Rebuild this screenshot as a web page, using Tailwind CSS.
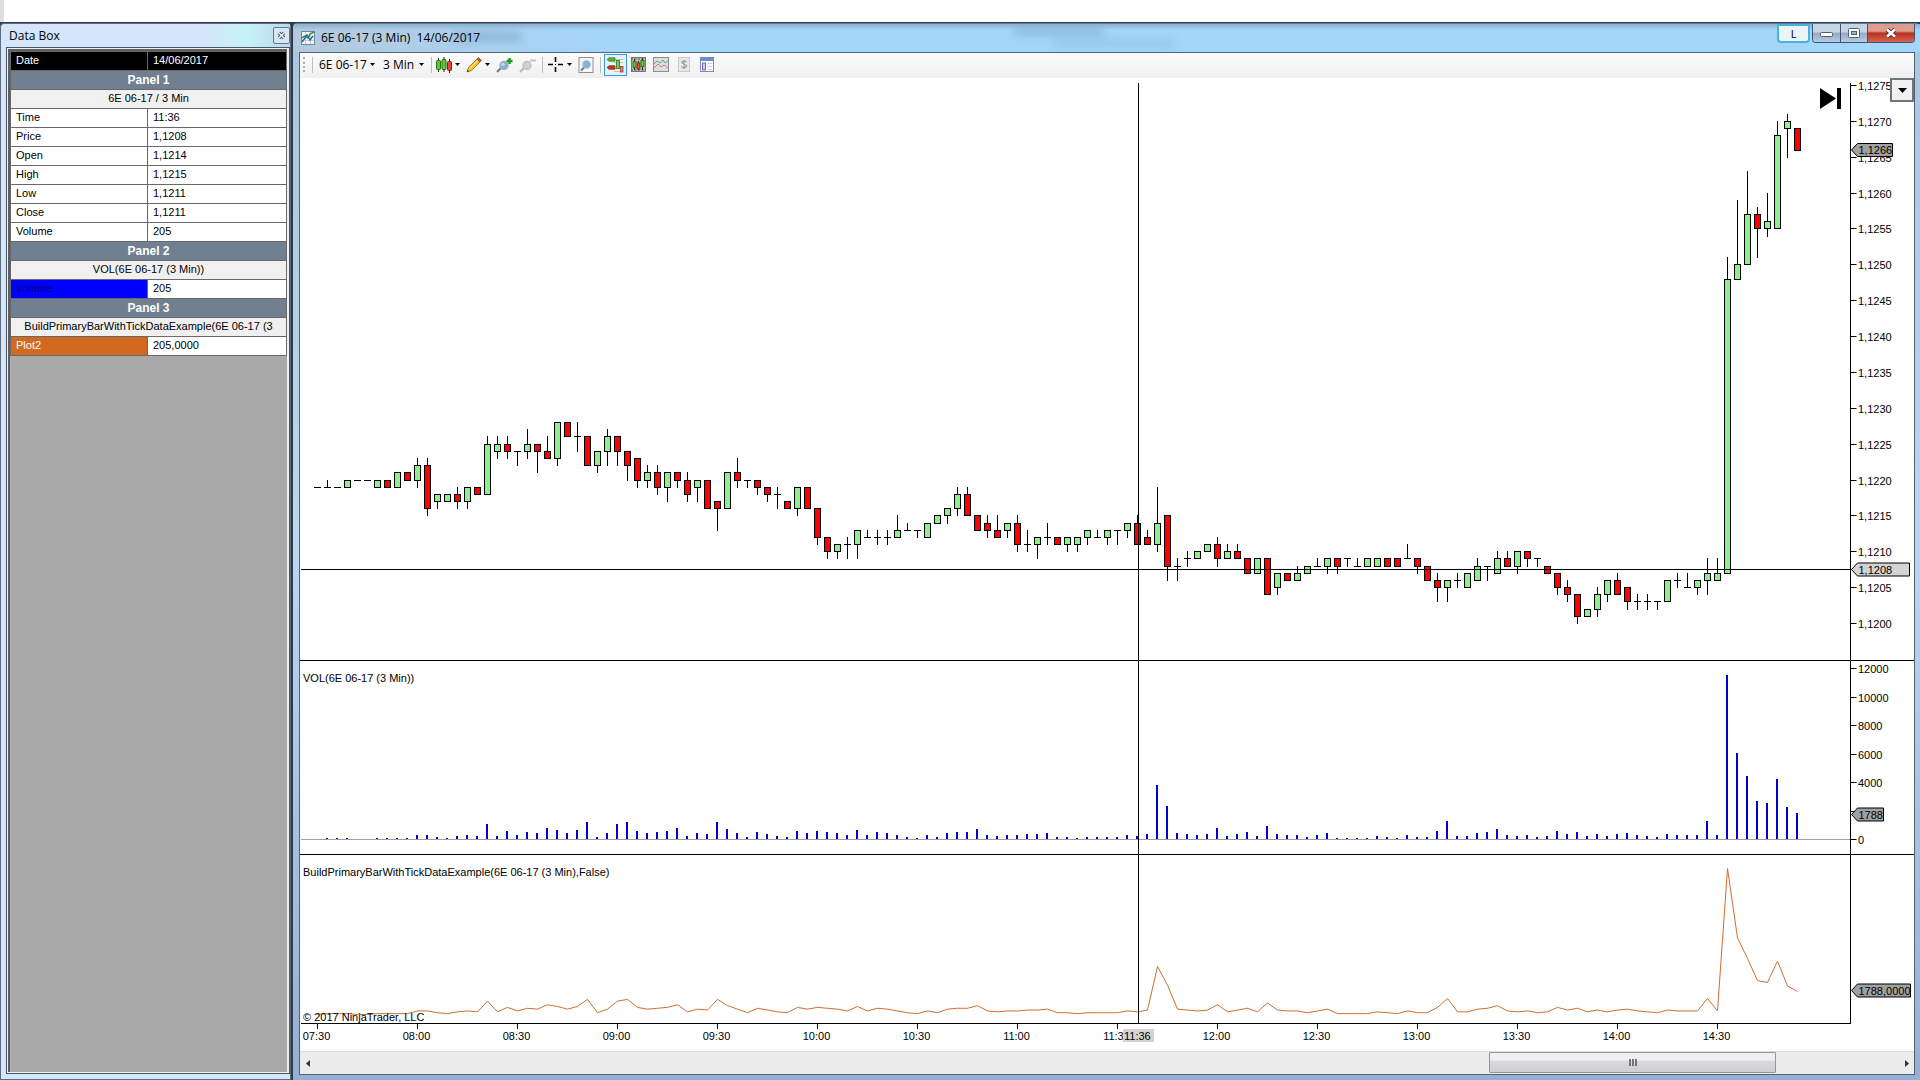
<!DOCTYPE html>
<html lang="en">
<head>
    <meta charset="UTF-8">
    <meta name="viewport" content="width=device-width, initial-scale=1.0">
    <title>6E 06-17 (3 Min) 14/06/2017</title>
    <script src="https://cdn.jsdelivr.net/npm/@tailwindcss/browser@4"></script>
</head>
<body class="h-screen flex flex-col overflow-hidden bg-[#2f3b4a] text-black text-[11px] font-['Liberation_Sans',Arial,sans-serif]">
    <div class="h-[22px] shrink-0 bg-white border-l-4 border-[#dfdfe1]"></div>

    <main class="flex-1 min-h-0 flex gap-[2px] pt-px">
        <!-- Data Box window -->
        <section class="w-[291px] shrink-0 flex flex-col border border-[#5d6b7c] rounded-t-sm bg-[#d3e6fa] pl-[5px] pb-[5px]">
            <header class="h-[23px] shrink-0 flex items-center justify-between pl-[3px] bg-linear-to-r from-[#d3e6fb] from-70% via-[#c6f2f6] via-85% to-[#bcd8ec]">
                <h2 class="text-[12px] font-['Open_Sans','Noto_Sans',sans-serif]">Data Box</h2>
                <button aria-label="Close data box" class="w-[17px] h-[17px] flex items-center justify-center rounded-[2px] border border-[#66788c] bg-[#d5e6f4]">
                    <svg width="9" height="9" viewBox="0 0 9 9"><path d="M2 2l5 5M7 2l-5 5" stroke="#4b5563" stroke-width="3.4"/><path d="M2 2l5 5M7 2l-5 5" stroke="#fff" stroke-width="1.5"/></svg>
                </button>
            </header>
            <div class="flex-1 min-h-0 border border-[#4c5563] bg-[#f0f0f0] p-px pr-[2px]">
                <div class="h-full border-2 border-r-0 border-b-0 border-[#5f5f5f] bg-[#a9a9a9]">
                    <table class="w-full table-fixed border-collapse">
                        <colgroup><col class="w-[137px]"><col></colgroup>
                        <tbody class="[&_tr]:h-[19px] [&_td]:border [&_td]:border-[#696969] [&_th]:border [&_th]:border-[#696969] [&_td]:px-[5px] [&_th]:px-[5px] [&_td]:py-0 [&_th]:py-0 [&_td]:align-top [&_th]:align-top leading-[16px] [&_th]:text-left [&_th]:font-normal">
                            <tr class="bg-black text-white"><th scope="row">Date</th><td>14/06/2017</td></tr>
                            <tr class="bg-[#708090] text-white"><td colspan="2" class="text-center text-[12px] leading-[18px] font-bold">Panel 1</td></tr>
                            <tr class="bg-[#f0f0f0]"><td colspan="2" class="text-center">6E 06-17 / 3 Min</td></tr>
                            <tr class="bg-white"><th scope="row">Time</th><td>11:36</td></tr>
                            <tr class="bg-white"><th scope="row">Price</th><td>1,1208</td></tr>
                            <tr class="bg-white"><th scope="row">Open</th><td>1,1214</td></tr>
                            <tr class="bg-white"><th scope="row">High</th><td>1,1215</td></tr>
                            <tr class="bg-white"><th scope="row">Low</th><td>1,1211</td></tr>
                            <tr class="bg-white"><th scope="row">Close</th><td>1,1211</td></tr>
                            <tr class="bg-white"><th scope="row">Volume</th><td>205</td></tr>
                            <tr class="bg-[#708090] text-white"><td colspan="2" class="text-center text-[12px] leading-[18px] font-bold">Panel 2</td></tr>
                            <tr class="bg-[#f0f0f0]"><td colspan="2" class="text-center">VOL(6E 06-17 (3 Min))</td></tr>
                            <tr class="bg-white"><th scope="row" class="bg-[#0000ff] text-[#00006e]">Volume</th><td>205</td></tr>
                            <tr class="bg-[#708090] text-white"><td colspan="2" class="text-center text-[12px] leading-[18px] font-bold">Panel 3</td></tr>
                            <tr class="bg-[#f0f0f0]"><td colspan="2" class="text-center whitespace-nowrap">BuildPrimaryBarWithTickDataExample(6E 06-17 (3</td></tr>
                            <tr class="bg-white"><th scope="row" class="bg-[#d2691e] text-white">Plot2</th><td>205,0000</td></tr>
                        </tbody>
                    </table>
                </div>
            </div>
        </section>

        <!-- Chart window -->
        <section class="flex-1 min-w-0 flex flex-col rounded-t-sm border-t border-[#5d7a98] bg-linear-to-b from-[#a9c6e0] via-[#b9d7f2] to-[#94b0d2] pl-[6px] pr-[5px] pb-[5px]">
            <header class="relative h-[28px] shrink-0 -mx-[5px] px-[5px] flex items-start justify-between bg-linear-to-r from-[#b4c9dd] via-[#a2d6fb] via-20% to-[#a2d6fb]">
                <div class="absolute inset-x-0 top-0 h-[6px] bg-linear-to-b from-[#8cb0cf] to-transparent"></div>
                <div class="absolute left-[160px] top-[9px] w-[66px] h-[8px] bg-[#7fa5c6]/70 blur-xs"></div>
                <div class="absolute left-[720px] top-[5px] w-[90px] h-[6px] bg-[#6f9cc0]/60 blur-xs"></div>
                <div class="absolute left-[760px] top-[17px] w-[120px] h-[5px] bg-[#6f9cc0]/40 blur-xs"></div>
                <h1 class="relative h-[27px] flex items-center gap-[6px] pl-[2px] text-[12px] whitespace-pre font-['Open_Sans','Noto_Sans',sans-serif]"><svg width="14" height="14" viewBox="0 0 14 14"><rect x=".5" y=".5" width="13" height="13" fill="#eef3f6" stroke="#6f8aa0"/><path d="M4.500 1v12M9.500 1v12M1 5.500h12M1 9.500h12" stroke="#c3d0db"/><path d="M1 7l3-2 3 2 2-4 4-2" fill="none" stroke="#2f9a35" stroke-width="1.500"/><path d="M1 11l3-4 2-3 3 5 3-4" fill="none" stroke="#2a5a9a" stroke-width="1.300"/></svg>6E 06-17 (3 Min)  14/06/2017</h1>
                <div class="relative flex items-start gap-[2px]">
                    <button class="w-[33px] h-[19px] rounded-b-sm border-2 border-[#45b4dd] bg-[#eef3f8] text-[11px] leading-[15px] font-['Open_Sans','Noto_Sans',sans-serif]">L</button>
                    <div class="h-[19px] flex rounded-b-[4px] border border-t-0 border-[#40566e] overflow-hidden">
                        <button aria-label="Minimize" class="w-[28px] flex items-center justify-center border-r border-[#40566e] bg-linear-to-b from-[#c5d5e5] from-45% via-[#94abc3] via-50% to-[#b4cde4]">
                            <svg width="13" height="8" viewBox="0 0 13 8"><rect x=".5" y="3.500" width="12" height="4" rx="1" fill="#fff" stroke="#4f5f70"/></svg>
                        </button>
                        <button aria-label="Maximize" class="w-[27px] flex items-center justify-center border-r border-[#40566e] bg-linear-to-b from-[#c5d5e5] from-45% via-[#94abc3] via-50% to-[#b4cde4]">
                            <svg width="12" height="10" viewBox="0 0 12 10"><rect x=".5" y=".5" width="11" height="9" rx="1" fill="#fff" stroke="#4f5f70"/><rect x="3.500" y="3.500" width="5" height="3" fill="#9db3c8" stroke="#4f5f70"/></svg>
                        </button>
                        <button aria-label="Close" class="w-[46px] flex items-center justify-center bg-linear-to-b from-[#dd9c8d] from-40% via-[#b93020] via-50% to-[#d4644c]">
                            <svg width="12" height="10" viewBox="0 0 12 10"><path d="M2 1.500l8 7M10 1.500l-8 7" stroke="#5c3030" stroke-width="4.400"/><path d="M2 1.500l8 7M10 1.500l-8 7" stroke="#fff" stroke-width="2.600"/></svg>
                        </button>
                    </div>
                </div>
            </header>

            <div class="flex-1 min-h-0 flex flex-col border border-[#4f6377] bg-white">
                <!-- Toolbar -->
                <nav class="h-[25px] shrink-0 flex items-center pb-[2px] bg-linear-to-b from-[#fbfbfb] to-[#f0f0f0] text-[12px] font-['Open_Sans','Noto_Sans',sans-serif]">
                    <span class="w-[2px] h-[15px] ml-[3px] border-l-2 border-dotted border-[#b0b0b0]"></span>
                    <span class="w-px h-[16px] ml-[7px] bg-[#bdbdbd]"></span>
                    <button class="ml-[6px] w-[56px] flex items-center justify-between whitespace-nowrap">6E 06-17 <svg width="5" height="3"><path d="M0 0h5L2.500 3z"/></svg></button>
                    <button class="ml-[8px] w-[41px] flex items-center justify-between whitespace-nowrap">3 Min <svg width="5" height="3"><path d="M0 0h5L2.500 3z"/></svg></button>
                    <span class="w-px h-[16px] ml-[7px] bg-[#bdbdbd]"></span>
                    <button aria-label="Chart style" class="ml-[4px] flex items-center gap-[3px]">
                        <svg width="16" height="16" viewBox="0 0 16 16"><path d="M2.500 1v14M8 0v15M13.500 2v14" stroke="#222"/><rect x=".5" y="3.500" width="4" height="9" rx="1" fill="#5ccb2c" stroke="#266b12"/><rect x="6" y="2.500" width="4" height="10" rx="1" fill="#5ccb2c" stroke="#266b12"/><rect x="11.500" y="4.500" width="4" height="9" rx="1" fill="#e04a36" stroke="#8d1d10"/></svg>
                        <svg width="5" height="3"><path d="M0 0h5L2.500 3z"/></svg>
                    </button>
                    <button aria-label="Drawing tools" class="ml-[6px] flex items-center gap-[3px]">
                        <svg width="16" height="16" viewBox="0 0 16 16"><path d="M1 15l1.500-4.500L11 2l3 3-8.500 8.500z" fill="#f6c530" stroke="#a97a15"/><path d="M11 2l1.500-1.500 3 3L14 5z" fill="#c25a4c" stroke="#8a4038" stroke-width=".7"/><path d="M1 15l.7-2 1.300 1.300z" fill="#333"/><path d="M4 11l7-7" stroke="#fdeaa0"/></svg>
                        <svg width="5" height="3"><path d="M0 0h5L2.500 3z"/></svg>
                    </button>
                    <button aria-label="Zoom in" class="ml-[6px]">
                        <svg width="18" height="16" viewBox="0 0 18 16"><path d="M1 15l4-4" stroke="#777" stroke-width="2"/><circle cx="8" cy="8.500" r="4" fill="#7fb2dc" stroke="#9fb3c4" stroke-width="1.500"/><circle cx="7" cy="7.500" r="1.800" fill="#b9daf2"/><path d="M13.500 1v6M10.500 4h6" stroke="#18a01c" stroke-width="2.400"/></svg>
                    </button>
                    <button aria-label="Zoom out" class="ml-[5px]" disabled>
                        <svg width="18" height="16" viewBox="0 0 18 16"><path d="M1 15l4-4" stroke="#b8b8b8" stroke-width="2"/><circle cx="8" cy="8.500" r="4" fill="#d0d0d0" stroke="#c2c2c2" stroke-width="1.500"/><path d="M11 3.500h6" stroke="#c4c4c4" stroke-width="2"/></svg>
                    </button>
                    <span class="w-px h-[16px] ml-[5px] bg-[#bdbdbd]"></span>
                    <button aria-label="Cross hair" class="ml-[5px] flex items-center gap-[4px]">
                        <svg width="15" height="15" viewBox="0 0 15 15"><path d="M7.500 0v5M7.500 10v5M0 7.500h5M10 7.500h5" stroke="#000" stroke-width="1.600"/><rect x="7" y="7" width="1" height="1"/></svg>
                        <svg width="5" height="3"><path d="M0 0h5L2.500 3z"/></svg>
                    </button>
                    <button aria-label="Zoom frame" class="ml-[6px]">
                        <svg width="16" height="16" viewBox="0 0 16 16"><rect x="1" y=".5" width="14" height="15" fill="#f6f6f6" stroke="#8b8f96"/><path d="M3 13.500l3.500-3.500" stroke="#777" stroke-width="2"/><circle cx="8.500" cy="7.500" r="3.600" fill="#7fb2dc" stroke="#9fb3c4" stroke-width="1.400"/></svg>
                    </button>
                    <span class="w-px h-[16px] ml-[6px] bg-[#bdbdbd]"></span>
                    <button aria-label="Chart trader" class="ml-[3px] w-[23px] h-[22px] flex items-center justify-center border border-[#3399e8] bg-[#e6f2fc]">
                        <svg width="17" height="16" viewBox="0 0 17 16"><path d="M7 2.500h9M7 5.500h9M7 11.500h9M7 14.500h9" stroke="#bcc6bf"/><path d="M0 2.500L2 .8h6v3.400H2z" fill="#55b838" stroke="#2d7a1c" stroke-width=".7"/><path d="M0 10.500l2-1.700h6v3.400H2z" fill="#cc3524" stroke="#7f1a10" stroke-width=".7"/><rect x="9.500" y="3.500" width="3" height="8" fill="#6fce4a" stroke="#2d7a1c" stroke-width=".8"/><rect x="13.500" y="9.500" width="2.500" height="5.500" fill="#dc8278" stroke="#a03a30" stroke-width=".8"/></svg>
                    </button>
                    <button aria-label="Data series" class="ml-[4px]">
                        <svg width="15" height="15" viewBox="0 0 15 15"><rect x=".5" y=".5" width="14" height="14" fill="#b9c0b9" stroke="#777"/><path d="M0 2h15M0 13h15" stroke="#555" stroke-dasharray="2 1.500"/><path d="M3.500 2v11M7.500 4v9M11.500 1v12" stroke="#222"/><rect x="2" y="4.500" width="3" height="6" fill="#58cc30" stroke="#1c6a10" stroke-width=".8"/><rect x="6" y="6" width="3" height="6" fill="#e04a36" stroke="#8d1d10" stroke-width=".8"/><rect x="10" y="3.500" width="3" height="6" fill="#58cc30" stroke="#1c6a10" stroke-width=".8"/></svg>
                    </button>
                    <button aria-label="Indicators" class="ml-[7px]">
                        <svg width="16" height="15" viewBox="0 0 16 15"><rect x=".5" y=".5" width="15" height="14" fill="#dcdfe0" stroke="#8a8f94"/><path d="M1 7l3-3 3 2 3-3 2 3 3-2" fill="none" stroke="#67aa78"/><path d="M1 11l4-4 3 3 3-2 4 3" fill="none" stroke="#d27c74"/></svg>
                    </button>
                    <button aria-label="Strategies" class="ml-[9px]" disabled>
                        <svg width="12" height="15" viewBox="0 0 12 15"><rect x=".5" y=".5" width="11" height="14" fill="#e9e9e9" stroke="#c9c9c9"/><path d="M8.500 5C8 4 4 3.500 4 5.500s4.500 1.500 4.500 3.500S4 11 3.500 9.500M6 3v9" fill="none" stroke="#9b9b9b" stroke-width="1.200"/></svg>
                    </button>
                    <button aria-label="Properties" class="ml-[10px]">
                        <svg width="14" height="15" viewBox="0 0 14 15"><rect x=".5" y=".5" width="13" height="14" fill="#fff" stroke="#7c8cae"/><rect x="1" y="1" width="12" height="3" fill="#5f93d6"/><rect x="2.500" y="6" width="3" height="7" fill="#d9c4f2" stroke="#8a5fc4"/><path d="M7.500 6.500h5M7.500 9.500h5M7.500 12.500h5" stroke="#c6cede"/></svg>
                    </button>
                </nav>

                <!-- Chart panels -->
                <div id="panels" class="relative flex-1 min-h-0 grid grid-cols-1 grid-rows-[583fr_194fr_169fr_27px]">
                    <div class="min-h-0 border-b border-black"><svg id="price" class="block w-full h-full" role="img" aria-label="Price panel"></svg></div>
                    <div class="min-h-0 border-b border-black"><svg id="volume" class="block w-full h-full" role="img" aria-label="Volume panel"></svg></div>
                    <div class="min-h-0"><svg id="plot" class="block w-full h-full" role="img" aria-label="Indicator panel"></svg></div>
                    <div class="min-h-0"><svg id="time" class="block w-full h-full" role="img" aria-label="Time axis"></svg></div>
                    <button aria-label="Go to last bar" class="absolute right-[73px] top-[10px]">
                        <svg width="21" height="21" viewBox="0 0 21 21"><path d="M0 0l16 10.500L0 21zM17 0h4v21h-4z"/></svg>
                    </button>
                    <button aria-label="Scale options" class="absolute right-0 top-0 w-[24px] h-[24px] flex items-center justify-center border-2 border-[#6d7480] bg-[#f1f1f1]">
                        <svg width="9" height="5"><path d="M0 0h9L4.500 5z"/></svg>
                    </button>
                </div>

                <!-- Horizontal scrollbar -->
                <div class="h-[23px] shrink-0 flex items-center border-t border-[#dedede] bg-[#ececec]">
                    <button aria-label="Scroll left" class="w-[15px] h-full flex items-center justify-center"><svg width="4" height="7"><path d="M4 0v7L0 3.500z" fill="#333"/></svg></button>
                    <div class="flex-1 h-full flex justify-end pr-[123px]">
                        <div role="scrollbar" aria-orientation="horizontal" aria-controls="price" aria-valuenow="89" class="w-[287px] h-[21px] flex items-center justify-center gap-px rounded-[1px] border border-[#969696] bg-linear-to-b from-[#f0f0f0] from-35% via-[#d9d9db] via-45% to-[#cfcfd1]">
                            <span class="w-[2px] h-[7px] bg-[#777]"></span><span class="w-[2px] h-[7px] bg-[#777]"></span><span class="w-[2px] h-[7px] bg-[#777]"></span>
                        </div>
                    </div>
                    <button aria-label="Scroll right" class="w-[15px] h-full flex items-center justify-center"><svg width="4" height="7"><path d="M0 0v7l4-3.500z" fill="#333"/></svg></button>
                </div>
            </div>
        </section>
    </main>

    <script>
        // open,high,low,close of each 3 minute bar, in ticks above 1,1200
        const bars = `19,19,19,19 19,20,19,19 19,19,19,19 19,20,19,20 20,20,20,20 20,20,20,20 19,20,19,20 20,20,19,19 19,21,19,21 21,21,20,20
            20,23,19,22 22,23,15,16 17,18,16,18 17,18,17,18 18,19,16,17 17,19,16,19 19,19,18,18 18,26,18,25 24,26,23,25 25,26,23,24
            24,24,22,24 24,27,23,25 25,25,21,24 24,26,23,23 23,28,22,28 28,28,26,26 26,28,24,26 26,26,22,22 22,24,21,24 24,27,22,26
            26,26,22,24 24,24,20,22 23,23,19,20 20,22,19,21 21,22,18,19 19,21,17,21 21,21,19,20 20,21,17,18 19,20,17,20 20,20,16,16
            17,17,13,16 16,21,16,21 21,23,19,20 20,20,19,20 20,20,18,19 19,19,17,18 18,19,16,18 17,17,16,16 16,19,15,19 19,19,16,16
            16,16,11,12 12,12,9,10 10,11,9,11 11,12,9,11 11,13,9,13 12,13,12,12 12,13,11,12 12,13,11,12 12,15,12,13 13,14,13,13
            13,13,12,13 12,14,12,14 14,15,14,15 15,16,14,16 16,19,15,18 18,19,15,15 15,15,13,13 14,15,12,13 13,15,12,12 13,14,12,14
            14,15,10,11 11,13,10,11 11,12,9,12 12,14,11,12 12,12,11,11 11,12,10,12 11,12,10,12 12,13,11,13 12,13,12,12 12,13,11,13
            13,13,11,13 13,14,12,14 14,15,11,11 12,13,11,11 11,19,10,14 15,15,6,8 8,9,6,8 9,10,8,9 9,10,9,10 10,11,10,11
            11,12,8,9 9,11,9,10 10,11,9,9 9,9,7,7 7,9,7,9 9,9,4,4 5,7,4,7 7,7,6,6 6,8,6,7 7,8,7,8
            8,9,8,8 8,9,7,9 9,9,7,8 9,9,8,9 8,9,8,8 8,9,8,9 8,9,8,9 9,9,8,8 9,9,8,8 9,11,9,9
            9,9,7,8 8,8,6,6 6,7,3,5 5,6,3,6 6,7,5,6 5,7,5,7 6,9,6,8 8,8,6,8 7,10,7,9 9,10,8,8
            8,10,7,10 10,10,8,9 9,9,8,9 8,8,7,7 7,7,4,5 5,6,3,4 4,4,0,1 1,2,1,2 2,5,1,4 4,6,3,6
            6,7,4,4 5,5,2,3 3,4,2,3 3,4,2,3 3,3,2,3 3,6,3,6 6,7,5,6 5,7,5,5 5,6,4,6 6,9,4,7
            6,9,6,7 7,51,7,48 48,59,48,50 50,63,50,57 57,58,51,55 55,60,54,56 55,70,55,68 69,71,65,70 69,69,66,66`.split(/\s+/).map(b => b.split(',').map(Number));

        const volumes = [
            0, 1, 1, 1, 0, 0, 1, 1, 1, 1, 4, 4, 2, 1, 3, 4, 3, 15, 3, 8, 4, 7, 6, 11, 9, 6, 9, 17, 2, 6,
            15, 17, 8, 6, 7, 8, 11, 3, 6, 5, 17, 10, 6, 2, 7, 5, 3, 2, 8, 6, 8, 7, 6, 4, 9, 4, 7, 6, 4, 2,
            1, 4, 2, 6, 7, 7, 10, 4, 3, 4, 4, 5, 5, 6, 2, 2, 1, 2, 2, 2, 2, 4, 3, 5, 54, 33, 6, 5, 4, 5,
            11, 3, 5, 7, 3, 13, 5, 4, 4, 2, 4, 6, 1, 1, 1, 1, 3, 2, 1, 4, 2, 2, 8, 18, 3, 3, 6, 7, 10, 4,
            3, 4, 2, 3, 8, 5, 7, 3, 5, 3, 5, 6, 4, 3, 2, 5, 4, 4, 4, 18, 4, 164, 86, 63, 38, 36, 60, 32, 26
        ];

        const AXIS = 64, STEP = 10, CURSOR = 82;
        const el = id => document.getElementById(id);
        const line = (x1, y1, x2, y2, color = '#000') => `<path d="M${x1} ${y1}L${x2} ${y2}" stroke="${color}" fill="none"/>`;
        const label = (x, y, text, anchor = 'start') => `<text x="${x}" y="${y}" text-anchor="${anchor}" font-size="11">${text}</text>`;
        const tag = (x, y, w, text, fill) =>
            `<path d="M${x + 1} ${y}l6 -6.500h${w}v13h${-w}z" fill="${fill}" stroke="#000"/>` + label(x + 8, y + 4, text);

        function draw() {
            const w = el('price').clientWidth;
            const axis = w - AXIS + 0.5;
            const barX = i => axis - 53 - (bars.length - 1 - i) * STEP;
            const cursorX = barX(CURSOR) + 1;

            // price
            let h = el('price').clientHeight;
            const priceY = t => Math.round(h - 37 - t * (h - 44) / 75) + 0.5;
            let out = line(axis, 5, axis, h);
            for (let t = 0; t <= 75; t += 5) {
                out += line(axis, priceY(t), axis + 6, priceY(t)) + label(axis + 7.5, priceY(t) + 4, '1,' + (1200 + t));
            }
            bars.forEach(([o, hi, lo, c], i) => {
                const x = barX(i), top = priceY(Math.max(o, c)), bottom = priceY(Math.min(o, c));
                out += line(x, priceY(hi) - 0.5, x, priceY(lo) + 0.5);
                out += o === c
                    ? line(x - 3.5, top, x + 3.5, top)
                    : `<rect x="${x - 3}" y="${top}" width="6" height="${bottom - top}" fill="${c > o ? '#90ee90' : '#ff0000'}" stroke="#000"/>`;
            });
            const cursorY = h - 90.5;
            out += line(1, cursorY, axis, cursorY) + line(cursorX, 5, cursorX, h);
            out += tag(axis, priceY(66) - 0.5, 35, '1,1266', '#a0a0a0') + tag(axis, cursorY, 52, '1,1208', '#d3d3d3');
            el('price').innerHTML = out;

            // volume
            h = el('volume').clientHeight;
            const base = h - 14.5;
            const volY = v => Math.round(base - v * (base - 7.5) / 12000 - 0.5) + 0.5;
            out = label(3, 21, 'VOL(6E 06-17 (3 Min))') + line(1, base, axis, base, '#a0a0a0') + line(axis, 0, axis, h);
            for (let v = 0; v <= 12000; v += 2000) {
                out += line(axis, volY(v), axis + 6, volY(v));
                if (v !== 2000) out += label(axis + 7.5, volY(v) + 4, v);
            }
            volumes.forEach((v, i) => {
                const y = volY(v * 70) - 0.5;
                if (v) out += `<rect x="${barX(i) - 1.5}" y="${y}" width="2" height="${base - 0.5 - y}" fill="#0000d2"/>`;
            });
            out += line(cursorX, 0, cursorX, h) + tag(axis, volY(1788), 26, '1788', '#a0a0a0');
            el('volume').innerHTML = out;

            // indicator
            h = el('plot').clientHeight;
            const plotY = v => h - 9.5 - v * (h - 23) / 164;
            out = label(3, 21, 'BuildPrimaryBarWithTickDataExample(6E 06-17 (3 Min),False)');
            out += `<polyline points="${volumes.map((v, i) => barX(i) + ',' + plotY(v)).join(' ')}" fill="none" stroke="#cd6f33"/>`;
            out += label(3, h - 3, '© 2017 NinjaTrader, LLC');
            out += line(axis, 0, axis, h) + line(1, h - 0.5, axis + 0.5, h - 0.5) + line(cursorX, 0, cursorX, h);
            out += tag(axis, Math.round(plotY(26)) - 0.5, 53, '1788,0000', '#a0a0a0');
            el('plot').innerHTML = out;

            // time axis
            out = '';
            for (let i = 0; i < bars.length; i += 10) {
                const minutes = 450 + i * 3;
                const text = String(Math.floor(minutes / 60)).padStart(2, '0') + ':' + String(minutes % 60).padStart(2, '0');
                out += line(barX(i), 0, barX(i), 5) + label(barX(i) - 1, 16, text, 'middle');
            }
            out += `<rect x="${cursorX - 15.5}" y="5" width="31" height="13" fill="#d3d3d3"/>` + label(cursorX - 14.5, 16, '11:36');
            el('time').innerHTML = out;
        }

        new ResizeObserver(draw).observe(el('panels'));
    </script>
</body>
</html>
